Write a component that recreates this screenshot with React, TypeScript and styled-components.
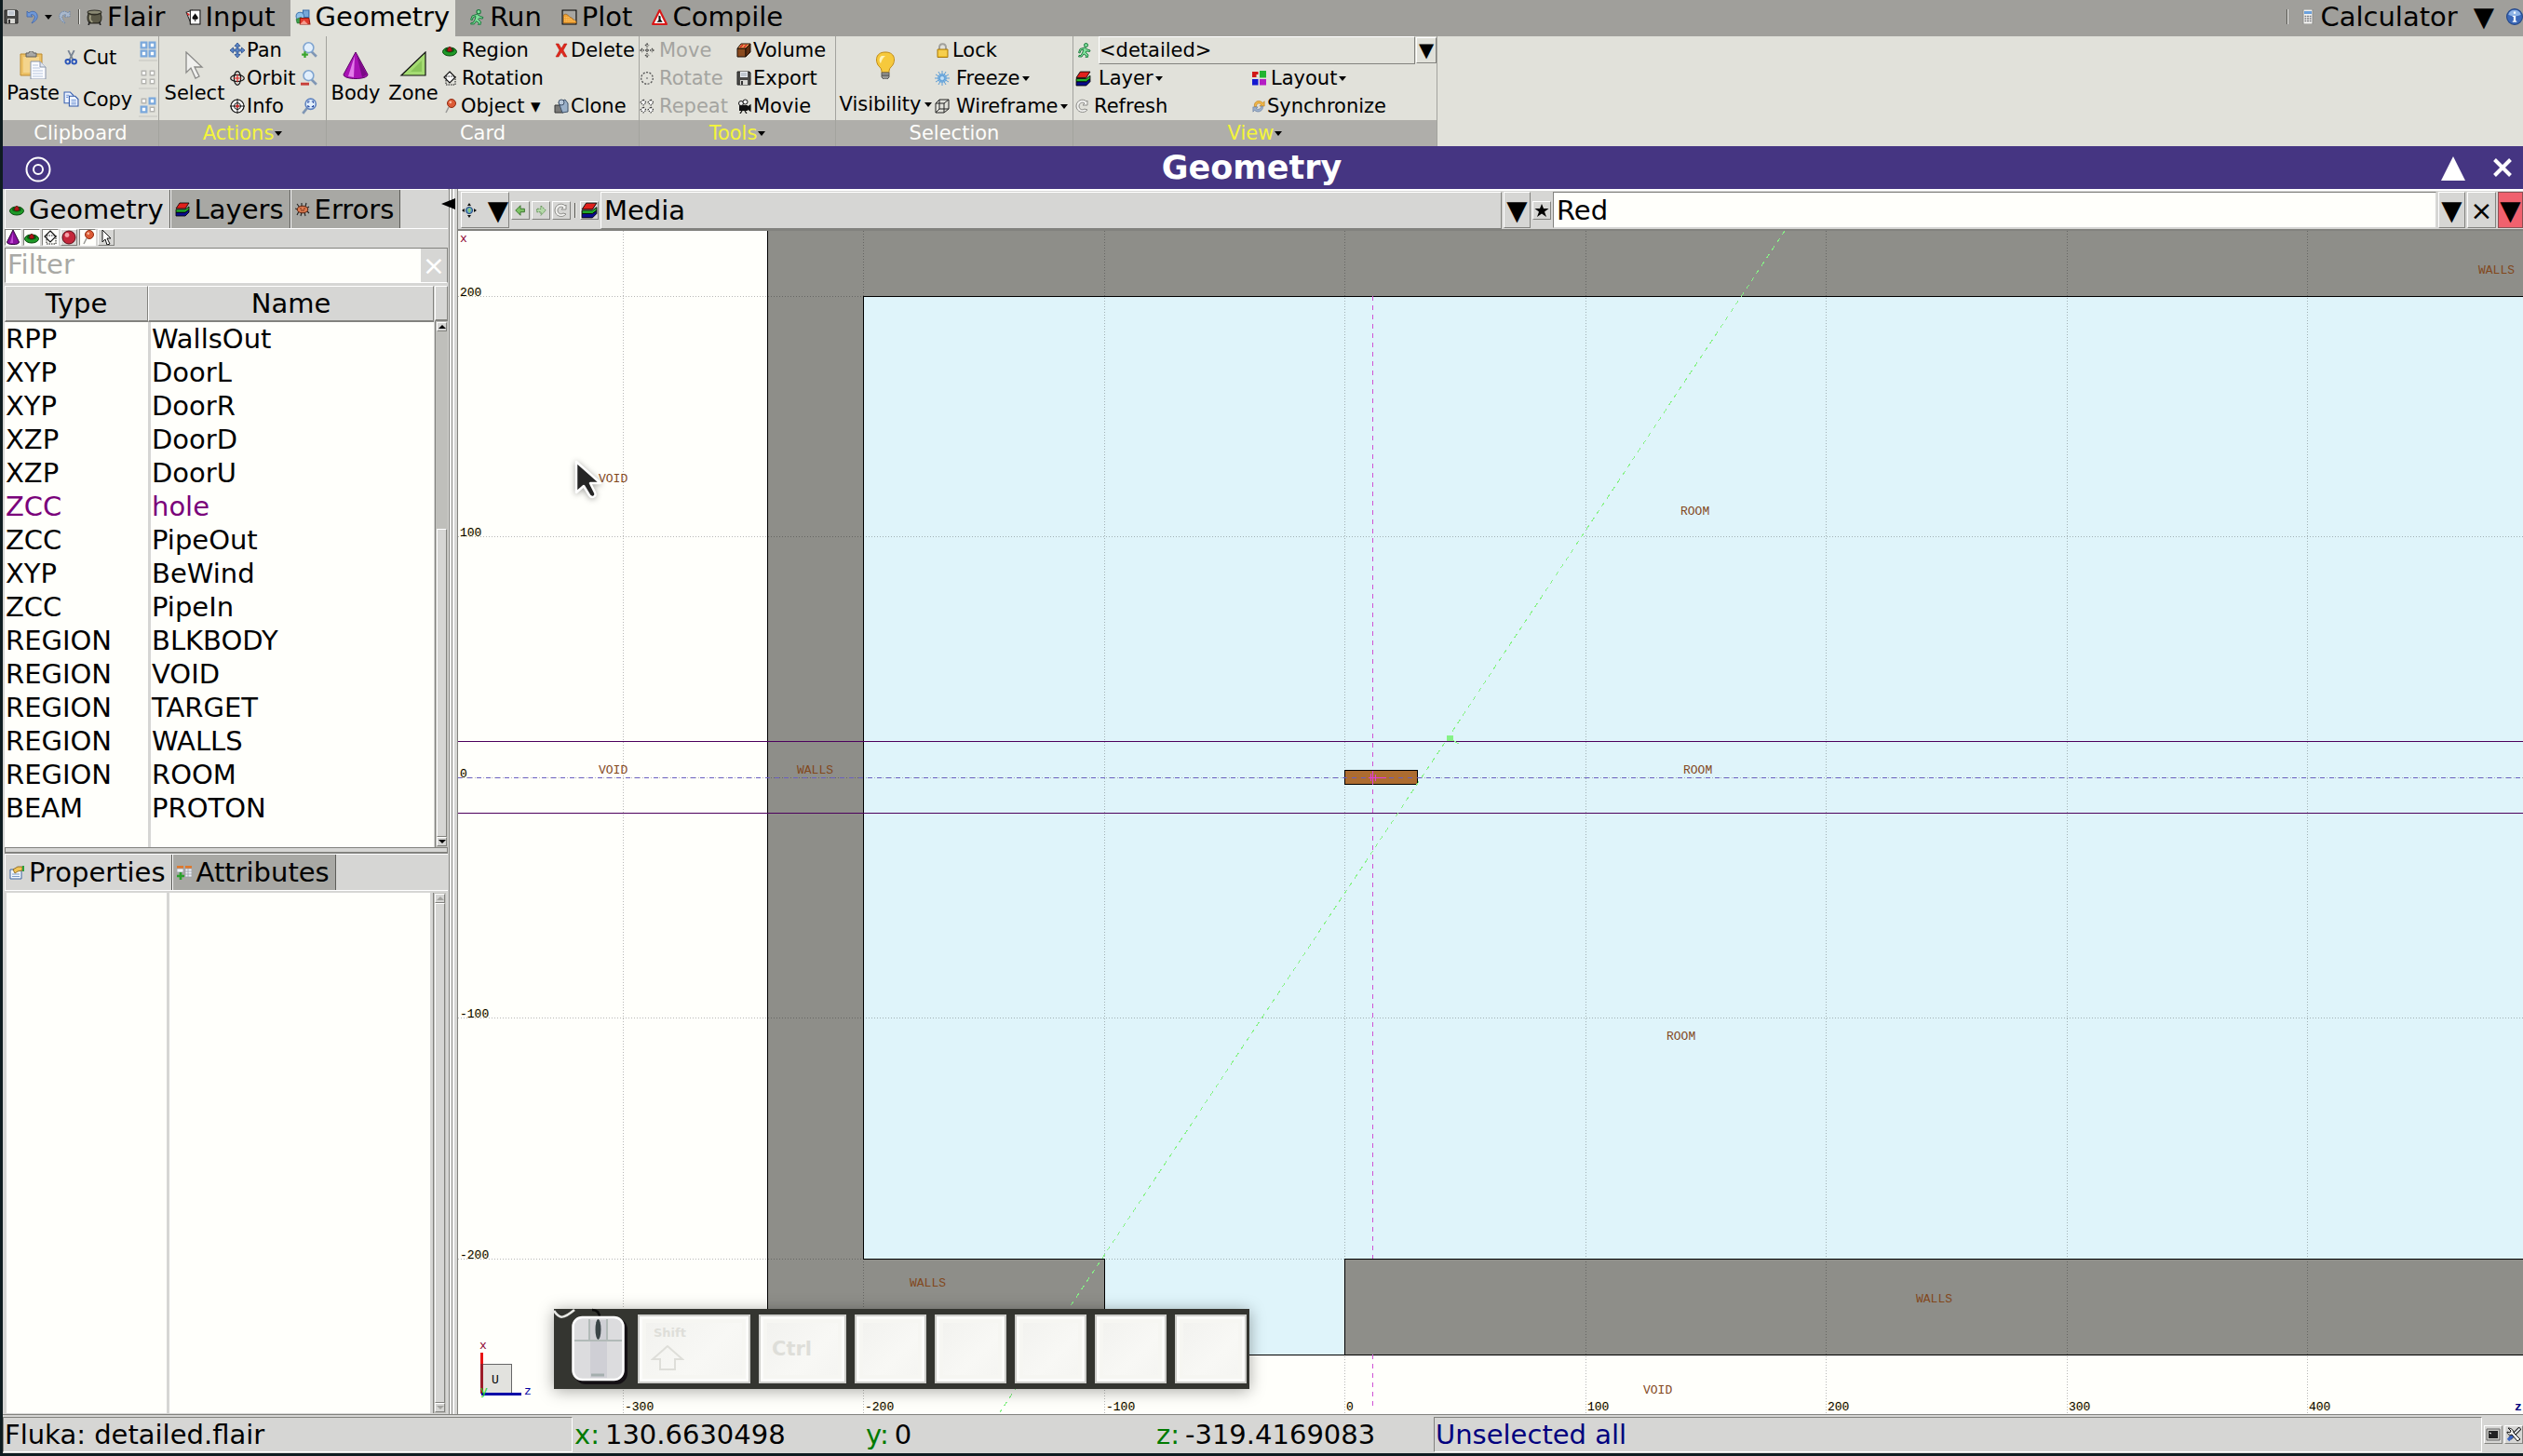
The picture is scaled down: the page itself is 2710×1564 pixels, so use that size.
import React from "react";
import styled, { createGlobalStyle, css } from "styled-components";

const SANS = `"DejaVu Sans", Verdana, sans-serif`;
const MONO = `"Liberation Mono", "Courier New", monospace`;
const FACE = "#d6d6d4";
const PAPER = "#fffffb";
const LIGHT = "#ffffff";
const SHADE = "#82827e";

const GlobalStyle = createGlobalStyle`
  *, *::before, *::after { box-sizing: border-box; }
  body { margin: 0; background: #0e1c20; font-family: ${SANS}; color: #000; }
  button, input, select { font: inherit; color: inherit; margin: 0; padding: 0; border: 0; border-radius: 0; background: none; }
  button { white-space: nowrap; }
  svg { display: block; flex: none; }
`;

/* ---------- icons ---------- */

const icons: Record<string, React.ReactNode> = {
  save: (<><path d="M1 1h13l1 1v13H1z" fill="#4a4a48" stroke="#222" /><path d="M4 1h8v6H4z" fill="#e8ecf0" /><path d="M5 3h6M5 5h6" stroke="#9aa4b0" /><path d="M4 10h8v5H4z" fill="#d8d8d4" /><path d="M5 11h2v4H5z" fill="#333" /></>),
  undo: (<path d="M3 2v6h6L7 6c3-1 5 1 4 4-1 2-2 3-3 5 4-2 7-5 6-9C13 2 8 1 5 4z" fill="#6f98d8" stroke="#3d63a8" strokeWidth="0.8" />),
  redo: (<path d="M13 2v6H7l2-2C6 5 4 7 5 10c1 2 2 3 3 5-4-2-7-5-6-9C3 2 8 1 11 4z" fill="#a9b8cc" stroke="#5f7ea8" strokeWidth="0.8" strokeDasharray="1.5 1" />),
  pot: (<><ellipse cx="8" cy="3" rx="7" ry="2" fill="#8b8a74" stroke="#33322a" /><path d="M2 4c-2 5-1 9 2 10h8c3-1 4-5 2-10-3 2-9 2-12 0z" fill="#5c5a48" stroke="#2a2920" /><path d="M4 6c-1 3 0 6 2 7" stroke="#a9a78c" strokeWidth="1.5" fill="none" /><path d="M3 13l-1 3M13 13l1 3" stroke="#222" strokeWidth="1.6" /></>),
  cards: (<><path d="M1 3l6-2 5 12-6 2z" fill="#fff" stroke="#222" /><path d="M5 1h10v14H5z" fill="#fff" stroke="#111" /><path d="M10 4c1 2 3 3 3 5 0 1-2 2-3 1l1 2H9l1-2c-1 1-3 0-3-1 0-2 2-3 3-5z" fill="#111" /><path d="M2 4l2 2" stroke="#d22" strokeWidth="1.6" /></>),
  solids: (<><path d="M8 1h6v7H8z" fill="#76a7d8" stroke="#356aa8" /><circle cx="5" cy="7" r="4" fill="#8fc0ea" stroke="#4478b0" /><path d="M1 10l5-2 1 6H2z" fill="#3aa04a" stroke="#1f6b2b" strokeWidth="0.6" /><path d="M5 9h9l1 6H5z" fill="#e03a2c" stroke="#98180e" /><path d="M5 15l4-4 4 4z" fill="#f59a8d" /></>),
  run: (<><circle cx="9.5" cy="2.5" r="2" fill="#7fe09a" stroke="#17753a" /><path d="M8 5l3 2 3 1-.5 1.500L10 9l-1 1 3 3-1 3H9l1-2-3-2-2 3H1.500l.5-1.500h2L6 10l.5-3L4 8l-1 3-1.500-.5L3 6.500z" fill="#7fe09a" stroke="#17753a" strokeWidth="0.9" /></>),
  plot: (<><path d="M1 1h14v14H1z" fill="#a7a6a2" stroke="#000" /><path d="M2 14V6c3-3 5 1 7 2 3 1 3 3 6 4v2z" fill="#f0a030" stroke="#8a5410" strokeWidth="0.6" /><path d="M3 8h5M3 10h8M3 12h11" stroke="#ffd17e" strokeDasharray="1 1" /></>),
  warn: (<><path d="M8 1l7 14H1z" fill="#fff" stroke="#d81818" strokeWidth="2" strokeLinejoin="round" /><path d="M7 6l2 1v3l2 3H5l2-2z" fill="#111" /></>),
  calc: (<><path d="M3 0h10v16H3z" fill="#f2f2f0" stroke="#8d8d8a" /><path d="M4 2h8v3H4z" fill="#6aa0dc" /><path d="M4.500 7.500h7M4.500 10h7M4.500 12.500h7" stroke="#75757a" strokeWidth="1.400" strokeDasharray="1.800 0.800" /></>),
  info: (<><circle cx="8" cy="8" r="7.500" fill="#3b68b8" stroke="#254888" /><path d="M2 6a6.300 6.300 0 0112 0c-4 2-8 2-12 0z" fill="#8fb4e6" /><path d="M6 7h3v5h1v1H6v-1h1V8H6zM7 3h2v2H7z" fill="#fff" /></>),
  paste: (<><path d="M1 3h23v23H1z" fill="#edc267" stroke="#bd8a2e" /><path d="M4 6h17v17H4z" fill="#f4d48c" /><path d="M7 2h3c0-3 5-3 5 0h3v4H7z" fill="#a9a9a6" stroke="#5f5f5c" /><path d="M12 11h10l6 6v13H12z" fill="#fbfcff" stroke="#8894a8" /><path d="M22 11v6h6" fill="#dfe5ef" stroke="#8894a8" /><path d="M14 15h6M14 18h8M14 21h11M14 24h11M14 27h11" stroke="#b6c4dc" /></>),
  cut: (<><path d="M5 1l5 10M11 1L6 11" stroke="#7a8594" strokeWidth="1.800" /><circle cx="4.500" cy="12.500" r="2.200" fill="none" stroke="#2b55b8" strokeWidth="1.800" /><circle cx="11" cy="12.500" r="2.200" fill="none" stroke="#2b55b8" strokeWidth="1.800" /></>),
  copy: (<><path d="M1 1h6l3 3v8H1z" fill="#eef4ff" stroke="#3c64b4" /><path d="M6 5h6l3 3v7H6z" fill="#eef4ff" stroke="#2f57a8" /><path d="M8 9h5M8 11h5M8 13h5M3 4h3M3 6h2" stroke="#6f93d4" /></>),
  selAll: (<path d="M1.500 1.500h5v5h-5zM9.500 1.500h5v5h-5zM1.500 9.500h5v5h-5zM9.500 9.500h5v5h-5z" fill="#fff" stroke="#7aa8dc" strokeWidth="2" />),
  selNone: (<path d="M2 2h4v4H2zM10 2h4v4h-4zM2 10h4v4H2zM10 10h4v4h-4z" fill="#fff" stroke="#b4b4b0" strokeWidth="1.200" />),
  selInv: (<><path d="M9.500 1.500h5v5h-5zM1.500 9.500h5v5h-5z" fill="#fff" stroke="#7aa8dc" strokeWidth="2" /><path d="M2 2h4v4H2zM10 10h4v4h-4z" fill="#fff" stroke="#b4b4b0" strokeWidth="1.200" /></>),
  pointer: (<path d="M6 1v22l5-5 5 11 4-2-5-10h8z" fill="#f0f0ee" stroke="#8a8a88" strokeWidth="1.300" />),
  pan: (<path d="M8 0l3 3.500H9V7h3.500V5L16 8l-3.500 3V9H9v3.500h2L8 16l-3-3.500h2V9H3.500v2L0 8l3.500-3v2H7V3.500H5z" fill="#5b86c8" stroke="#2c4f8c" strokeWidth="0.800" />),
  orbit: (<><ellipse cx="8" cy="8" rx="7.300" ry="3.600" fill="none" stroke="#111" strokeWidth="1.200" /><ellipse cx="8" cy="8" rx="3.600" ry="7.300" fill="none" stroke="#111" strokeWidth="1.200" /><path d="M8 4v8M4 8h8" stroke="#d22" strokeWidth="1.200" /></>),
  target: (<><circle cx="8" cy="8" r="7" fill="#fff" stroke="#111" strokeWidth="1.200" /><circle cx="8" cy="8" r="3.500" fill="none" stroke="#111" /><path d="M8 0v16M0 8h16" stroke="#111" /><circle cx="8" cy="8" r="1.800" fill="#c22" /></>),
  zoomIn: (<><path d="M10 9l5 5" stroke="#7f96b4" strokeWidth="2.400" /><circle cx="7.500" cy="5.500" r="4.800" fill="#e2effc" stroke="#7fa4d0" strokeWidth="1.400" /><path d="M4 9v6M1 12h6" stroke="#3aa52e" strokeWidth="2" /></>),
  zoomOut: (<><path d="M10 9l5 5" stroke="#7f96b4" strokeWidth="2.400" /><circle cx="7.500" cy="5.500" r="4.800" fill="#e2effc" stroke="#7fa4d0" strokeWidth="1.400" /><path d="M0 13.500h8" stroke="#c8403a" strokeWidth="2.600" /></>),
  zoomFit: (<><path d="M6 10l-4 5" stroke="#7f96b4" strokeWidth="2.400" /><circle cx="9.500" cy="6" r="5" fill="#e2effc" stroke="#5f83c0" strokeWidth="1.400" /><path d="M7 5V3.500h1.500M10.500 3.500H12V5M12 7v1.500h-1.500M8.500 8.500H7V7" fill="none" stroke="#2648a0" /></>),
  cone: (<><path d="M15 1L2 25c0 6 26 6 26 0z" fill="#a812b4" stroke="#5d0468" /><path d="M14 5L7 27l6 1z" fill="#e27bea" /><path d="M16 4l11 21-5 3z" fill="#7a0a86" /></>),
  wedge: (<><path d="M28 1v25H2z" fill="#a4dc72" stroke="#111" strokeWidth="1.200" /><path d="M24 10v12H12z" fill="#8ac65a" /></>),
  region: (<><ellipse cx="8" cy="9.500" rx="7.500" ry="4.500" fill="#1f9a28" stroke="#0a4a10" /><ellipse cx="8" cy="8" rx="5" ry="2.400" fill="#0c5c14" /><path d="M5.500 8.500C6 3 10 3 10.500 8.500c-1 1.200-4 1.200-5 0z" fill="#b3161a" stroke="#5a0808" strokeWidth="0.700" /></>),
  rotation: (<><path d="M8 1l6 6-6 6-6-6z" fill="#fff" stroke="#111" strokeWidth="1.200" /><path d="M4 6h10v9H4z" fill="none" stroke="#111" strokeDasharray="1.500 1" /></>),
  object: (<><path d="M7 9l-3 6" stroke="#9a9a98" strokeWidth="1.600" /><circle cx="10" cy="5" r="4.500" fill="#dc5b36" stroke="#8f2b12" /><circle cx="8.800" cy="3.800" r="1.400" fill="#f9b9a0" /></>),
  del: (<path d="M2 1l3 0 3 5 3-5h3l-4 7 4 7h-3l-3-5-3 5H2l4-7z" fill="#e0281c" stroke="#b01208" strokeWidth="0.500" />),
  clone: (<><path d="M1 7h9v8H1z" fill="#7a7a78" stroke="#333" /><path d="M5 4l7-3 3 4v9l-6 1z" fill="#9ab0c8" stroke="#3d5068" /><circle cx="8" cy="4" r="3" fill="#b8c8da" stroke="#3d5068" /></>),
  moveOff: (<path d="M8 1v14M1 8h14M6 3l2-2 2 2M6 13l2 2 2-2M3 6L1 8l2 2M13 6l2 2-2 2" fill="none" stroke="#4a4a48" strokeWidth="1.300" strokeDasharray="1.500 1" />),
  rotateOff: (<><circle cx="8" cy="8" r="6.300" fill="none" stroke="#555" strokeWidth="1.300" strokeDasharray="2 1.500" /><circle cx="8" cy="8" r="1" fill="#888" /></>),
  repeatOff: (<path d="M4 1l3 3-3 3-3-3zM12 1l3 3-3 3-3-3zM4 9l3 3-3 3-3-3zM12 9l3 3-3 3-3-3z" fill="#fff" stroke="#333" strokeWidth="1.100" strokeDasharray="1.500 1" />),
  volume: (<><path d="M1 6h9v9H1z" fill="#8a4a1e" stroke="#1f0e04" /><path d="M1 6l4-5h10l-5 5z" fill="#f29a50" stroke="#1f0e04" /><path d="M10 6l5-5v9l-5 5z" fill="#5e2e10" stroke="#1f0e04" /><path d="M4 5l3-3M8 5l3-3" stroke="#c22" strokeWidth="1.300" /></>),
  movie: (<><path d="M3 7h9v6H3z" fill="#111" /><circle cx="5" cy="5" r="2.500" fill="#eee" stroke="#111" /><circle cx="9.500" cy="3.500" r="2.500" fill="#eee" stroke="#111" /><path d="M12 9l3-2v6l-3-2zM6 13l-2 3M9 13l2 3" fill="#111" stroke="#111" strokeWidth="1.300" /></>),
  bulb: (<><path d="M15 1C3 1 4 13 9 17c2 2 2 4 2 6h8c0-2 0-4 2-6 5-4 6-16-6-16z" fill="#f6c93c" stroke="#c08a14" /><path d="M11 5c-3 2-3 6-1 8 1-3 2-6 5-8z" fill="#fff3b8" /><path d="M11 23h8v5l-2 2h-4l-2-2z" fill="#9a9a96" stroke="#5a5a58" /><path d="M11 26h8" stroke="#444" /></>),
  lock: (<><path d="M5 8V5c0-5 7-5 7 0v3" fill="none" stroke="#a0a09c" strokeWidth="2" /><path d="M3 7h11v8.500H3z" fill="#f2c22c" stroke="#a87a10" /><path d="M4 9h9M4 11h9M4 13h9" stroke="#ffe68c" strokeWidth="0.700" /></>),
  freeze: (<><circle cx="8" cy="8" r="5" fill="#84b8e4" /><path d="M8 0v16M1 4l14 8M1 12l14-8M4 1l8 14M12 1L4 15M0 8h16" stroke="#5c9cd4" strokeWidth="1" /><circle cx="8" cy="8" r="2" fill="#c4e0f6" /></>),
  wire: (<path d="M1 5h9v10H1zM5 1h10v10H5zM1 5l4-4M10 5l5-4M10 15l5-4M1 15l4-4" fill="none" stroke="#222" />),
  layers: (<><path d="M1 11h10l4-3v3l-4 4H1z" fill="#0a0a8c" stroke="#000" strokeWidth="0.800" /><path d="M1 8h10l4-3v3l-4 3H1z" fill="#22b42c" stroke="#000" strokeWidth="0.800" /><path d="M5 1h10l-4 6H1z" fill="#e0201c" stroke="#000" strokeWidth="0.800" /></>),
  refresh: (<path d="M13 2v5H8l2-2c-3-2-6 0-6 3s3 5 6 3l3 1c-4 5-12 2-12-4S8-1 12 3z" fill="#f2f2f0" stroke="#8c8c88" />),
  grid4: (<><path d="M0 1h4.500v6H0zM4.500 1h2v3h-2z" fill="#d01818" /><path d="M8 0h7v7.500H8z" fill="#22b430" /><path d="M0 9h6.500v6.500H0z" fill="#1418d0" /><path d="M8 9h7v6.500H8z" fill="#b41cc4" /></>),
  sync: (<><path d="M3 9C1 3 8-1 13 4l2-2v6H9l2-2C8 3 5 5 5 9z" fill="#f0b648" stroke="#b87c18" strokeWidth="0.700" /><path d="M13 8c1 6-6 9-10 5l-2 2V9h6l-2 2c3 2 6 0 6-3z" fill="#9cb0cc" stroke="#62789a" strokeWidth="0.700" /></>),
  bug: (<><path d="M2 2l3 4M7 1v4M12 1l-1 4M15 5l-3 2M0 7l3 1M2 14l2-4M6 15l1-4M11 15l-1-4M15 12l-3-3" stroke="#222" strokeWidth="1.100" /><ellipse cx="8" cy="8" rx="5.800" ry="3.800" fill="#dc7a50" stroke="#5a2410" /><path d="M5 7h2M9 7h2M6 9h4" stroke="#7c3418" /></>),
  coneS: (<><path d="M8 0L1.500 13c0 3.500 13 3.500 13 0z" fill="#8a10a0" stroke="#2c0438" /><path d="M8 3l-3 11h3z" fill="#c24cd4" /></>),
  ball: (<><circle cx="8" cy="8" r="7" fill="#c4283c" stroke="#5c0c18" /><circle cx="6" cy="5.500" r="2.400" fill="#f5a0a8" /></>),
  arrow: (<path d="M4 0v13l3-3 2 6 3-1-3-6h4z" fill="#fff" stroke="#111" />),
  home: (<><circle cx="8" cy="8" r="3.600" fill="#5d94c8" stroke="#234a78" /><path d="M6 7l3-2 1 3-2 3z" fill="#8ccc7c" /><path d="M8 0l2 3H6zM8 16l2-3H6zM0 8l3-2v4zM16 8l-3-2v4z" fill="#111" /></>),
  back: (<path d="M2 8l6-6v4h5v4H8v4z" fill="#7cc264" stroke="#2f6c22" />),
  fwd: (<path d="M14 8L8 2v4H3v4h5v4z" fill="#b4d8a8" stroke="#4d8442" strokeDasharray="2 1" />),
  star: (<path d="M8 1l2 5h5.500l-4.500 3.500 2 5.500-5-3.500L3 15l2-5.500L.5 6H6z" fill="#000" />),
  props: (<><path d="M1 5h12v10H1z" fill="#f2f7fc" stroke="#3c64a0" /><path d="M3 10h8M3 12.500h8" stroke="#7c9cc8" /><path d="M4 5l5-3 5 0v4l-5 1-3 2z" fill="#f0c458" stroke="#7c5810" strokeWidth="0.800" /><path d="M14 1h2v6h-2z" fill="#2ca03c" /></>),
  attrs: (<><path d="M0 1h7v3H0zM9 1h7v3H9z" fill="#e0782c" /><path d="M0 4h7v4H0zM9 4h7v9H9z" fill="#eef2f8" stroke="#9aa0a8" strokeWidth="0.800" /><path d="M9 7h7M9 10h7M12 4v9" stroke="#9aa0a8" strokeWidth="0.800" /><path d="M4 8v8M0 12h8" stroke="#2aa02c" strokeWidth="2.600" /></>),
  term: (<><path d="M1 2h14v12H1z" fill="#c8c8c4" stroke="#666" /><path d="M3 4h10v8H3z" fill="#222" /><path d="M4 6l2 1" stroke="#fff" /></>),
  tools: (<><path d="M15 1L4 12" stroke="#111" strokeWidth="4" /><path d="M14.500 1.500L6 10" stroke="#e4e8ec" strokeWidth="2" /><path d="M7 9l-5 5" stroke="#3c64c0" strokeWidth="3.400" /><path d="M2 1l3 3-1 2-3-1c0 3 3 4 5 3l6 7 3-2-7-7c0-3-3-5-6-5z" fill="#f4f4f2" stroke="#111" /></>),
};

type IconProps = { name: string; size?: number; box?: number };
const Icon = ({ name, size = 16, box = 16 }: IconProps) => (
  <svg width={size} height={size} viewBox={`0 0 ${box} ${box}`} aria-hidden="true">
    {icons[name]}
  </svg>
);
const Caret = () => (
  <svg width="8" height="5" viewBox="0 0 8 5" aria-hidden="true">
    <path d="M0 0h8L4 5z" fill="#000" />
  </svg>
);

/* ---------- frame ---------- */

const Window = styled.div`
  min-height: 100vh;
  padding: 0 0 3px 3px;
  display: flex;
  flex-direction: column;
  overflow: hidden;
  font-size: 29px;
  line-height: 36px;
`;

const TopBar = styled.header`
  height: 39px;
  display: flex;
  align-items: stretch;
  background: #a09f9b;
`;

const QuickBar = styled.div`
  display: flex;
  align-items: center;
  gap: 6px;
  padding: 0 2px 3px 1px;
`;

const IconButton = styled.button`
  display: flex;
  align-items: center;
`;

const Rule = styled.span`
  width: 2px;
  height: 16px;
  background: linear-gradient(90deg, #55544f 50%, #efefec 50%);
`;

const Tabs = styled.nav`
  display: flex;
  gap: 10px;
  flex: 1;
`;

const TopTab = styled.button<{ $active?: boolean }>`
  display: flex;
  align-items: center;
  gap: 5px;
  padding: 0 6px 3px 5px;
  background: ${(p) => (p.$active ? "#e1e1da" : "transparent")};
`;

const TopTools = styled.div`
  display: flex;
  align-items: center;
  gap: 13px;
  padding-bottom: 3px;
`;

const ToolButton = styled.button`
  display: flex;
  align-items: center;
  gap: 5px;
  svg + span { padding-right: 4px; }
`;

/* ---------- ribbon ---------- */

const Ribbon = styled.section`
  display: flex;
  background: #e1e1da;
  font-size: 21px;
  line-height: 26px;
`;

const Group = styled.div<{ $w: number }>`
  width: ${(p) => p.$w}px;
  flex: none;
  border-right: 1px solid #a3a39e;
  display: flex;
  flex-direction: column;
`;

const GroupBody = styled.div`
  height: 90px;
  display: flex;
`;

const GroupLabel = styled.button<{ $menu?: boolean }>`
  height: 28px;
  display: flex;
  align-items: center;
  justify-content: center;
  gap: 1px;
  background: #afaeaa;
  color: ${(p) => (p.$menu ? "#f4f53a" : "#fdfdfa")};
`;

const Big = styled.button<{ $w: number }>`
  width: ${(p) => p.$w}px;
  flex: none;
  display: flex;
  flex-direction: column;
  align-items: center;
  gap: 2px;
  padding-top: 16px;
`;

const BigCaption = styled.span<{ $low?: boolean }>`
  display: flex;
  align-items: center;
  gap: 3px;
  padding-top: ${(p) => (p.$low ? 12 : 0)}px;
`;

const Col = styled.div<{ $w: number }>`
  width: ${(p) => p.$w}px;
  flex: none;
  display: flex;
  flex-direction: column;
  justify-content: space-around;
`;

const Item = styled.button<{ $gap?: number }>`
  height: 28px;
  display: flex;
  align-items: center;
  gap: 2px;
  white-space: pre;
  &:disabled { color: #a4a4a0; }
  svg + span { padding-left: ${(p) => p.$gap ?? 0}px; }
`;

const Blank = styled.div`
  height: 28px;
`;

const MiniButton = styled.button`
  height: 23px;
  width: 20px;
  display: flex;
  align-items: center;
  justify-content: center;
  border-bottom: 2px solid #d3d3cd;
`;

const ViewBody = styled.div`
  height: 90px;
  display: grid;
  grid-template-columns: 190px 1fr;
  grid-template-rows: repeat(3, 30px);
  align-items: center;
  padding-left: 2px;
`;

const Scope = styled.label`
  grid-column: 1 / -1;
  display: flex;
  align-items: center;
  gap: 7px;
  padding-left: 2px;
`;

const ScopeSelect = styled.select`
  appearance: none;
  flex: 1;
  height: 30px;
  border: 1px solid ${LIGHT};
  border-right-color: ${SHADE};
  border-bottom-color: ${SHADE};
`;

const Drop = styled.span`
  width: 22px;
  height: 28px;
  margin-left: -6px;
  text-align: center;
  border: 1px solid ${LIGHT};
  border-right-color: ${SHADE};
  border-bottom-color: ${SHADE};
`;

/* ---------- title strip ---------- */

const TitleBar = styled.div`
  height: 46px;
  flex: none;
  display: flex;
  align-items: center;
  background: #453582;
  color: #fff;
`;

const TitleLeft = styled.div`
  padding: 0 10px 0 22px;
`;

const TitleText = styled.h1`
  margin: 0;
  flex: 1;
  text-align: center;
  font-size: 35px;
  line-height: 44px;
  font-weight: bold;
`;

const TitleRight = styled.div`
  display: flex;
  align-items: center;
  gap: 30px;
  padding-right: 12px;
`;

/* ---------- side panel ---------- */

const Main = styled.main`
  flex: 1;
  min-height: 0;
  display: grid;
  grid-template-columns: 480px 9px minmax(0, 1fr);
  background: ${FACE};
`;

const Side = styled.aside`
  display: flex;
  flex-direction: column;
  padding: 0 1px 0 2px;
  border-right: 1px solid ${SHADE};
`;

const SideTabs = styled.div<{ $h: number }>`
  height: ${(p) => p.$h}px;
  display: flex;
  border-bottom: 1px solid ${LIGHT};
  border-top: 1px solid ${LIGHT};
`;

const SideTab = styled.button<{ $active?: boolean }>`
  display: flex;
  align-items: center;
  gap: 5px;
  padding: 0 6px 0 4px;
  border-left: 1px solid ${LIGHT};
  border-right: 1px solid #5c5c58;
  background: ${(p) => (p.$active ? FACE : "#a8a8a4")};
`;

const KindBar = styled.div`
  height: 20px;
  display: flex;
  gap: 2px;
`;

const KindButton = styled.button<{ $on?: boolean }>`
  width: 18px;
  height: 18px;
  display: flex;
  align-items: center;
  justify-content: center;
  border: 1px solid ${(p) => (p.$on ? SHADE : LIGHT)};
  border-right-color: ${(p) => (p.$on ? LIGHT : SHADE)};
  border-bottom-color: ${(p) => (p.$on ? LIGHT : SHADE)};
  background: ${(p) => (p.$on ? PAPER : FACE)};
`;

const FilterRow = styled.div`
  height: 38px;
  display: flex;
  border: 1px solid ${SHADE};
  border-bottom-color: ${LIGHT};
`;

const FilterInput = styled.input`
  flex: 1;
  min-width: 0;
  height: 34px;
  padding-left: 2px;
  background: ${PAPER};
  outline: none;
  box-shadow: 0 2px 0 ${PAPER};
  &::placeholder { color: #a9a9a5; opacity: 1; }
`;

const FilterClear = styled.button`
  width: 28px;
  color: #fff;
`;

const ListArea = styled.div`
  height: 606px;
  flex: none;
  display: flex;
  gap: 1px;
  padding-top: 3px;
`;

const List = styled.table`
  flex: 1;
  height: 100%;
  border-collapse: separate;
  border-spacing: 0;
  table-layout: fixed;
`;

const Th = styled.th<{ $w?: number }>`
  width: ${(p) => (p.$w ? `${p.$w}px` : "auto")};
  height: 39px;
  padding: 0;
  font-weight: normal;
  line-height: 35px;
  border: 1px solid ${LIGHT};
  border-right: 1px solid ${SHADE};
  border-bottom: 2px solid ${SHADE};
`;

const Td = styled.td<{ $mark?: boolean; $fill?: boolean }>`
  height: ${(p) => (p.$fill ? "auto" : "36px")};
  padding: 0 0 0 1px;
  background: ${PAPER};
  color: ${(p) => (p.$mark ? "#7a007a" : "#000")};
  & + & { border-left: 3px solid ${FACE}; }
`;

const Bar = styled.div`
  width: 14px;
  display: flex;
  flex-direction: column;
`;

const BarHead = styled.div`
  height: 38px;
  border: 1px solid ${LIGHT};
  border-right-color: ${SHADE};
  border-bottom: 2px solid ${SHADE};
`;

const Trough = styled.div`
  flex: 1;
  display: flex;
  flex-direction: column;
  padding: 1px;
  background: #bfbfbb;
  border-left: 1px solid ${SHADE};
`;

const BarArrow = styled.button<{ $down?: boolean; $off?: boolean }>`
  height: 10px;
  display: flex;
  align-items: center;
  justify-content: center;
  background: ${FACE};
  border: 1px solid ${LIGHT};
  border-right-color: ${SHADE};
  border-bottom-color: ${SHADE};
  &::before {
    content: "";
    border: 4px solid transparent;
    border-top-width: ${(p) => (p.$down ? 4 : 0)}px;
    border-bottom-width: ${(p) => (p.$down ? 0 : 4)}px;
    border-top-color: ${(p) => (p.$off ? "#a3a39f" : "#000")};
    border-bottom-color: ${(p) => (p.$off ? "#a3a39f" : "#000")};
  }
`;

const Spacer = styled.div<{ $grow: number }>`
  flex: ${(p) => p.$grow};
`;

const Thumb = styled.div<{ $grow: number }>`
  flex: ${(p) => p.$grow};
  background: ${FACE};
  border: 1px solid ${LIGHT};
  border-right-color: ${SHADE};
  border-bottom-color: ${SHADE};
`;

const HSash = styled.div`
  height: 7px;
  border: 1px solid ${SHADE};
  border-bottom: 2px solid ${SHADE};
  background: ${FACE};
`;

const Props = styled.div`
  flex: 1;
  display: grid;
  grid-template-columns: 172px 1fr 14px;
  column-gap: 3px;
  padding: 2px 2px 1px 2px;
`;

const Sheet = styled.div`
  background: ${PAPER};
`;

const VSash = styled.div`
  position: relative;
  background: ${FACE};
  border-left: 2px solid ${LIGHT};
  border-right: 1px solid ${SHADE};
  box-shadow: inset 1px 0 0 ${SHADE}, inset 3px 0 0 ${LIGHT};
`;

const Collapse = styled.button`
  position: absolute;
  top: 9px;
  right: 1px;
  width: 16px;
  height: 14px;
`;

/* ---------- viewer ---------- */

const Viewer = styled.section`
  display: flex;
  flex-direction: column;
  position: relative;
  min-width: 0;
`;

const ViewBar = styled.div`
  height: 45px;
  flex: none;
  display: flex;
  align-items: center;
  gap: 2px;
  padding-left: 3px;
  border-top: 2px solid ${LIGHT};
  border-bottom: 2px solid ${SHADE};
`;

const raised = css`
  background: ${FACE};
  border: 1px solid ${LIGHT};
  border-right-color: ${SHADE};
  border-bottom-color: ${SHADE};
`;

const MenuButton = styled.button`
  ${raised}
  height: 39px;
  width: 52px;
  display: flex;
  align-items: center;
  justify-content: space-between;
`;

const SmallButton = styled.button`
  ${raised}
  width: 20px;
  height: 20px;
  flex: none;
  display: flex;
  align-items: center;
  justify-content: center;
`;

const WideSelect = styled.select`
  ${raised}
  appearance: none;
  flex: 1 1 24px;
  min-width: 0;
  height: 40px;
  padding-left: 3px;
`;

const Square = styled.button<{ $w: number; $hot?: boolean }>`
  ${raised}
  width: ${(p) => p.$w}px;
  height: 39px;
  flex: none;
  overflow: hidden;
  ${(p) => p.$hot && css`background: #f0616e; border-color: #8a5054;`}
`;

const NameInput = styled.input`
  flex: 1 1 0;
  min-width: 0;
  height: 39px;
  padding-left: 3px;
  background: ${PAPER};
  border: 1px solid ${SHADE};
  border-right-color: ${FACE};
  border-bottom-color: ${FACE};
`;

const Canvas = styled.svg`
  flex: 1;
  width: 100%;
  min-height: 0;
  background: ${PAPER};
  shape-rendering: crispEdges;
  font-family: ${MONO};
  font-size: 13px;
`;

const AxisText = styled.text`
  fill: #000;
  paint-order: stroke;
  stroke: #fbf0c8;
  stroke-width: 1px;
`;

const RegionText = styled.text`
  fill: #82481c;
`;

/* ---------- key caster ---------- */

const Caster = styled.div`
  position: absolute;
  left: 103px;
  bottom: 27px;
  height: 86px;
  display: flex;
  align-items: center;
  gap: 9px;
  padding: 0 3px 0 19px;
  background: #343530;
  box-shadow: 0 2px 16px rgba(0, 0, 0, 0.35);
`;

const Key = styled.div<{ $w: number }>`
  width: ${(p) => p.$w}px;
  height: 74px;
  display: flex;
  flex-direction: column;
  justify-content: center;
  gap: 6px;
  padding-left: 12px;
  background: linear-gradient(135deg, #f1f1ee, #f8f8f5 60%, #f4f4f1);
  border: 2px solid #cfcfcc;
  box-shadow: inset 0 0 0 3px #fcfcfa, inset 0 0 0 7px #f6f6f2;
  color: #deded9;
  font-weight: bold;
  font-size: 21px;
  line-height: 24px;
`;

const KeySmall = styled.span`
  padding-left: 3px;
  font-size: 13px;
  line-height: 14px;
`;

/* ---------- status ---------- */

const Status = styled.footer`
  height: 42px;
  flex: none;
  display: flex;
  align-items: stretch;
  padding: 2px 0 1px;
  background: ${FACE};
  border-top: 1px solid ${SHADE};
`;

const Sunken = styled.div<{ $w?: number; $ink?: string }>`
  ${(p) => (p.$w ? `width: ${p.$w}px; flex: none;` : "flex: 1;")}
  padding-left: 1px;
  color: ${(p) => p.$ink ?? "#000"};
  border: 1px solid ${SHADE};
  border-right-color: ${LIGHT};
  border-bottom-color: ${LIGHT};
`;

const Coord = styled.div<{ $w: number }>`
  width: ${(p) => p.$w}px;
  flex: none;
  display: flex;
  gap: 6px;
  padding: 1px 0 0 2px;
`;

const Axis = styled.span`
  color: #007a00;
`;

const StatusTools = styled.div`
  display: flex;
  align-items: center;
  gap: 2px;
  padding-left: 2px;
`;

/* ---------- data ---------- */

const topTabs: [string, string][] = [
  ["pot", "Flair"], ["cards", "Input"], ["solids", "Geometry"],
  ["run", "Run"], ["plot", "Plot"], ["warn", "Compile"],
];

const cards: [string, string][] = [
  ["RPP", "WallsOut"], ["XYP", "DoorL"], ["XYP", "DoorR"], ["XZP", "DoorD"],
  ["XZP", "DoorU"], ["ZCC", "hole"], ["ZCC", "PipeOut"], ["XYP", "BeWind"],
  ["ZCC", "PipeIn"], ["REGION", "BLKBODY"], ["REGION", "VOID"], ["REGION", "TARGET"],
  ["REGION", "WALLS"], ["REGION", "ROOM"], ["BEAM", "PROTON"],
];

const kinds: [string, string, boolean][] = [
  ["coneS", "Bodies", true], ["region", "Regions", true], ["rotation", "Rotations", true],
  ["ball", "Materials", false], ["object", "Objects", true], ["arrow", "Selected", false],
];

/* Cross-section in the z (right) / x (up) plane, in centimetres. */
const SCALE = 2.585;
const zx = (z: number) => Math.round(952.45 + SCALE * z);
const xy = (x: number) => Math.round(586.6 - SCALE * x);

const gridZ = [-300, -200, -100, 0, 100, 200, 300, 400];
const gridX = [200, 100, 0, -100, -200];

const regionLabels: [string, number, number][] = [
  ["WALLS", 2170, 46], ["VOID", 151, 270], ["ROOM", 1313, 305], ["VOID", 151, 583],
  ["WALLS", 364, 583], ["ROOM", 1316, 583], ["ROOM", 1298, 869], ["WALLS", 485, 1134],
  ["WALLS", 1566, 1151], ["VOID", 1273, 1249],
];

const Plot = () => (
  <Canvas role="img" aria-label="Geometry cross-section">
    <path d={`M${zx(-240)} ${xy(240)}H3000V${xy(-240)}H${zx(-240)}z`} fill="#8e8e89" stroke="#000" />
    <path
      d={`M${zx(-200)} ${xy(200)}H3000V${xy(-200)}H${zx(0)}V${xy(-240)}H${zx(-100)}V${xy(-200)}H${zx(-200)}z`}
      fill="#dff4fa"
      stroke="#000"
    />
    <g stroke="#000" strokeOpacity="0.28" strokeDasharray="1 2">
      {gridZ.map((z) => <line key={z} x1={zx(z)} x2={zx(z)} y1="0" y2="100%" />)}
      {gridX.map((x) => <line key={x} x1="0" x2="100%" y1={xy(x)} y2={xy(x)} />)}
    </g>
    <rect x={zx(0)} y={xy(3)} width="78" height="15" fill="#ad6c30" stroke="#000" />
    <line x1="0" x2="100%" y1={xy(0)} y2={xy(0)} stroke="#6a5fc0" strokeDasharray="5 5" />
    <g stroke="#d052d4" strokeDasharray="5 5">
      <line x1="982" x2="982" y1={xy(200)} y2={xy(-200)} />
      <line x1="982" x2="982" y1={xy(-240)} y2="1266" />
    </g>
    <path d="M982 580v15M978 587h19M980 583v8M985 584v7" stroke="#e03ce0" fill="none" />
    <path d="M0 548.500H3000M0 625.500H3000" stroke="#4c005c" />
    <path d="M1425 0L582 1269" stroke="#86f286" strokeDasharray="5 5" fill="none" />
    <path d="M1062 542h6v5h-6zM1068 547l7 4" fill="#86f286" stroke="#86f286" />
    {regionLabels.map(([t, x, y], i) => <RegionText key={i} x={x} y={y}>{t}</RegionText>)}
    {gridX.map((x) => <AxisText key={x} x="2" y={xy(x)}>{x}</AxisText>)}
    {gridZ.map((z) => <AxisText key={z} x={zx(z) + 2} y="100%" dy="-4">{z}</AxisText>)}
    <text x="2" y="12" fill="#8c0030">x</text>
    <text x="2209" y="100%" dy="-4" fill="#00007c" fontWeight="bold">z</text>
    {/* orientation cube */}
    <rect x="25" y="1217" width="32" height="32" fill="#e2e2de" stroke="#666" />
    <text x="36" y="1238" fill="#000">U</text>
    <path d="M25 1205v44" stroke="#9c1c28" strokeWidth="3" />
    <path d="M25 1205v12" stroke="#e81414" strokeWidth="3" />
    <path d="M25 1249h43" stroke="#0000a8" strokeWidth="3" />
    <text x="24" y="1250" fill="#22d822">y</text>
    <text x="23" y="1201" fill="#8c0030">x</text>
    <text x="71" y="1250" fill="#0000a0">z</text>
    {/* mouse pointer */}
    <g shapeRendering="auto">
      <path
        d="M127 248v33l8-7 6 10c3 4 8 1 6-3l-5-10h11z"
        fill="#262626" stroke="#fff" strokeWidth="2.500" strokeLinejoin="round"
        filter="drop-shadow(0 1px 3px rgba(0,0,0,.35))"
      />
    </g>
  </Canvas>
);

const MouseArt = () => (
  <svg width="62" height="86" viewBox="0 0 62 86" aria-hidden="true" overflow="visible">
    <path d="M-19 2c6 9 10 9 22-1" fill="none" stroke="#e8e8e4" strokeWidth="2.500" />
    <path d="M22 1c6 0 8 4 8 9" fill="none" stroke="#0c0c0c" strokeWidth="2.500" />
    <rect x="3" y="10" width="57" height="71" rx="12" fill="#141014" />
    <rect x="1.500" y="9" width="54" height="67" rx="10" fill="#dcdcde" stroke="#fff" strokeWidth="2.500" />
    <rect x="20" y="12" width="18" height="62" fill="#c6c6ce" opacity="0.600" />
    <path d="M3 34h51M19 11v23M38 11v23" stroke="#b2bab8" strokeWidth="2" />
    <ellipse cx="28.500" cy="22" rx="3" ry="11" fill="#3a4448" />
    <path d="M21 71h14" stroke="#a4aeae" strokeWidth="3" />
  </svg>
);

export default function App() {
  return (
    <Window>
      <GlobalStyle />
      <TopBar>
        <QuickBar>
          <IconButton aria-label="Save"><Icon name="save" /></IconButton>
          <IconButton aria-label="Undo"><Icon name="undo" /></IconButton>
          <IconButton aria-label="Undo history"><Caret /></IconButton>
          <IconButton aria-label="Redo"><Icon name="redo" /></IconButton>
          <Rule />
        </QuickBar>
        <Tabs>
          {topTabs.map(([icon, label]) => (
            <TopTab key={label} $active={label === "Geometry"}>
              <Icon name={icon} size={17} />{label}
            </TopTab>
          ))}
        </Tabs>
        <TopTools>
          <Rule />
          <ToolButton><Icon name="calc" /><span>Calculator</span></ToolButton>
          <ToolButton aria-label="More tools">▼</ToolButton>
          <IconButton aria-label="About"><Icon name="info" size={18} /></IconButton>
        </TopTools>
      </TopBar>

      <Ribbon>
        <Group $w={168}>
          <GroupBody>
            <Big $w={65}><Icon name="paste" size={30} box={30} /><BigCaption>Paste</BigCaption></Big>
            <Col $w={81}>
              <Item $gap={2}><Icon name="cut" size={17} /><span>Cut</span></Item>
              <Item $gap={2}><Icon name="copy" size={17} /><span>Copy</span></Item>
            </Col>
            <Col $w={20}>
              <MiniButton aria-label="Select all"><Icon name="selAll" size={18} /></MiniButton>
              <MiniButton aria-label="Select none"><Icon name="selNone" size={18} /></MiniButton>
              <MiniButton aria-label="Invert selection"><Icon name="selInv" size={18} /></MiniButton>
            </Col>
          </GroupBody>
          <GroupLabel>Clipboard</GroupLabel>
        </Group>

        <Group $w={180}>
          <GroupBody>
            <Big $w={76}><Icon name="pointer" size={30} box={30} /><BigCaption>Select</BigCaption></Big>
            <Col $w={76}>
              <Item><Icon name="pan" /><span>Pan</span></Item>
              <Item><Icon name="orbit" /><span>Orbit</span></Item>
              <Item><Icon name="target" /><span>Info</span></Item>
            </Col>
            <Col $w={20}>
              <IconButton aria-label="Zoom in"><Icon name="zoomIn" size={18} /></IconButton>
              <IconButton aria-label="Zoom out"><Icon name="zoomOut" size={18} /></IconButton>
              <IconButton aria-label="Zoom to fit"><Icon name="zoomFit" size={18} /></IconButton>
            </Col>
          </GroupBody>
          <GroupLabel $menu>Actions<Caret /></GroupLabel>
        </Group>

        <Group $w={336}>
          <GroupBody>
            <Big $w={62}><Icon name="cone" size={30} box={30} /><BigCaption>Body</BigCaption></Big>
            <Big $w={62}><Icon name="wedge" size={30} box={30} /><BigCaption>Zone</BigCaption></Big>
            <Col $w={120}>
              <Item $gap={3}><Icon name="region" /><span>Region</span></Item>
              <Item $gap={3}><Icon name="rotation" /><span>Rotation</span></Item>
              <Item $gap={2}><Icon name="object" /><span>Object ▾</span></Item>
            </Col>
            <Col $w={90}>
              <Item><Icon name="del" /><span>Delete</span></Item>
              <Blank />
              <Item><Icon name="clone" /><span>Clone</span></Item>
            </Col>
          </GroupBody>
          <GroupLabel>Card</GroupLabel>
        </Group>

        <Group $w={211}>
          <GroupBody>
            <Col $w={104}>
              <Item disabled $gap={3}><Icon name="moveOff" /><span>Move</span></Item>
              <Item disabled $gap={3}><Icon name="rotateOff" /><span>Rotate</span></Item>
              <Item disabled $gap={3}><Icon name="repeatOff" /><span>Repeat</span></Item>
            </Col>
            <Col $w={106}>
              <Item><Icon name="volume" /><span>Volume</span></Item>
              <Item><Icon name="save" /><span>Export</span></Item>
              <Item><Icon name="movie" /><span>Movie</span></Item>
            </Col>
          </GroupBody>
          <GroupLabel $menu>Tools<Caret /></GroupLabel>
        </Group>

        <Group $w={255}>
          <GroupBody>
            <Big $w={106}>
              <Icon name="bulb" size={30} box={30} />
              <BigCaption $low>Visibility<Caret /></BigCaption>
            </Big>
            <Col $w={147}>
              <Item $gap={1}><Icon name="lock" /><span>Lock</span></Item>
              <Item $gap={5}><Icon name="freeze" /><span>Freeze</span><Caret /></Item>
              <Item $gap={5}><Icon name="wire" /><span>Wireframe</span><Caret /></Item>
            </Col>
          </GroupBody>
          <GroupLabel>Selection</GroupLabel>
        </Group>

        <Group $w={391}>
          <ViewBody>
            <Scope>
              <Icon name="run" />
              <ScopeSelect aria-label="Run"><option>&lt;detailed&gt;</option></ScopeSelect>
              <Drop aria-hidden="true">▼</Drop>
            </Scope>
            <Item $gap={6}><Icon name="layers" size={17} /><span>Layer</span><Caret /></Item>
            <Item $gap={2}><Icon name="grid4" /><span>Layout</span><Caret /></Item>
            <Item $gap={2}><Icon name="refresh" /><span>Refresh</span></Item>
            <Item><Icon name="sync" size={14} /><span>Synchronize</span></Item>
          </ViewBody>
          <GroupLabel $menu>View<Caret /></GroupLabel>
        </Group>
      </Ribbon>

      <TitleBar>
        <TitleLeft>
          <IconButton aria-label="Window menu">
            <svg width="32" height="32" viewBox="0 0 32 32" aria-hidden="true">
              <circle cx="16" cy="18" r="12.500" fill="none" stroke="#fff" strokeWidth="2" />
              <circle cx="16" cy="18" r="5" fill="none" stroke="#fff" strokeWidth="2" />
            </svg>
          </IconButton>
        </TitleLeft>
        <TitleText>Geometry</TitleText>
        <TitleRight>
          <IconButton aria-label="Maximize">
            <svg width="26" height="27" viewBox="0 0 26 27" aria-hidden="true"><path d="M13 1l13 26H0z" fill="#fff" /></svg>
          </IconButton>
          <IconButton aria-label="Close">
            <svg width="20" height="20" viewBox="0 0 20 20" aria-hidden="true"><path d="M1.500 1.500l17 17M18.500 1.500l-17 17" stroke="#fff" strokeWidth="4" /></svg>
          </IconButton>
        </TitleRight>
      </TitleBar>

      <Main>
        <Side>
          <SideTabs $h={43}>
            <SideTab $active><Icon name="region" />Geometry</SideTab>
            <SideTab><Icon name="layers" />Layers</SideTab>
            <SideTab><Icon name="bug" />Errors</SideTab>
          </SideTabs>
          <KindBar>
            {kinds.map(([icon, label, on]) => (
              <KindButton key={label} $on={on} aria-label={label}><Icon name={icon} /></KindButton>
            ))}
          </KindBar>
          <FilterRow>
            <FilterInput placeholder="Filter" aria-label="Filter" />
            <FilterClear aria-label="Clear filter">×</FilterClear>
          </FilterRow>
          <ListArea>
            <List>
              <thead>
                <tr><Th $w={154}>Type</Th><Th>Name</Th></tr>
              </thead>
              <tbody>
                {cards.map(([type, name]) => (
                  <tr key={name}>
                    <Td $mark={name === "hole"}>{type}</Td>
                    <Td $mark={name === "hole"}>{name}</Td>
                  </tr>
                ))}
                <tr><Td $fill /><Td $fill /></tr>
              </tbody>
            </List>
            <Bar>
              <BarHead />
              <Trough>
                <BarArrow aria-label="Scroll up" />
                <Spacer $grow={214} />
                <Thumb $grow={333} />
                <BarArrow $down aria-label="Scroll down" />
              </Trough>
            </Bar>
          </ListArea>
          <HSash />
          <SideTabs $h={40}>
            <SideTab $active><Icon name="props" />Properties</SideTab>
            <SideTab><Icon name="attrs" />Attributes</SideTab>
          </SideTabs>
          <Props>
            <Sheet />
            <Sheet />
            <Trough>
              <BarArrow $off aria-label="Scroll up" />
              <Thumb $grow={1} />
              <BarArrow $down $off aria-label="Scroll down" />
            </Trough>
          </Props>
        </Side>

        <VSash>
          <Collapse aria-label="Collapse panel">
            <svg width="16" height="14" viewBox="0 0 16 14" aria-hidden="true"><path d="M0 7l15-6v12z" fill="#000" /></svg>
          </Collapse>
        </VSash>

        <Viewer>
          <ViewBar>
            <MenuButton aria-label="View menu"><Icon name="home" />▼</MenuButton>
            <SmallButton aria-label="Back"><Icon name="back" size={14} /></SmallButton>
            <SmallButton aria-label="Forward"><Icon name="fwd" size={14} /></SmallButton>
            <SmallButton aria-label="Reload"><Icon name="refresh" /></SmallButton>
            <Blank as="span" />
            <Rule />
            <Blank as="span" />
            <SmallButton aria-label="Layer"><Icon name="layers" size={18} /></SmallButton>
            <WideSelect aria-label="Layer"><option>Media</option></WideSelect>
            <Square $w={29} aria-label="Choose layer">▼</Square>
            <SmallButton aria-label="Favourite"><Icon name="star" /></SmallButton>
            <NameInput aria-label="View name" defaultValue="Red" />
            <Square $w={29} aria-label="Choose view">▼</Square>
            <Square $w={31} aria-label="Clear view">×</Square>
            <Square $w={27} $hot aria-label="View colour">▼</Square>
          </ViewBar>
          <Plot />
          <Caster>
            <MouseArt />
            <Key $w={121}>
              <KeySmall>Shift</KeySmall>
              <svg width="36" height="28" viewBox="0 0 36 28" aria-hidden="true">
                <path d="M18 1L34 15H26V26H10V15H2z" fill="none" stroke="#deded9" strokeWidth="2" />
              </svg>
            </Key>
            <Key $w={94}>Ctrl</Key>
            <Key $w={77} /><Key $w={77} /><Key $w={77} /><Key $w={77} /><Key $w={77} />
          </Caster>
        </Viewer>
      </Main>

      <Status>
        <Sunken $w={612}>Fluka: detailed.flair</Sunken>
        <Coord $w={313}><Axis>x:</Axis>130.6630498</Coord>
        <Coord $w={312}><Axis>y:</Axis>0</Coord>
        <Coord $w={300}><Axis>z:</Axis>-319.4169083</Coord>
        <Sunken $ink="#00007e">Unselected all</Sunken>
        <StatusTools>
          <SmallButton aria-label="Console"><Icon name="term" /></SmallButton>
          <SmallButton aria-label="Preferences"><Icon name="tools" /></SmallButton>
        </StatusTools>
      </Status>
    </Window>
  );
}
